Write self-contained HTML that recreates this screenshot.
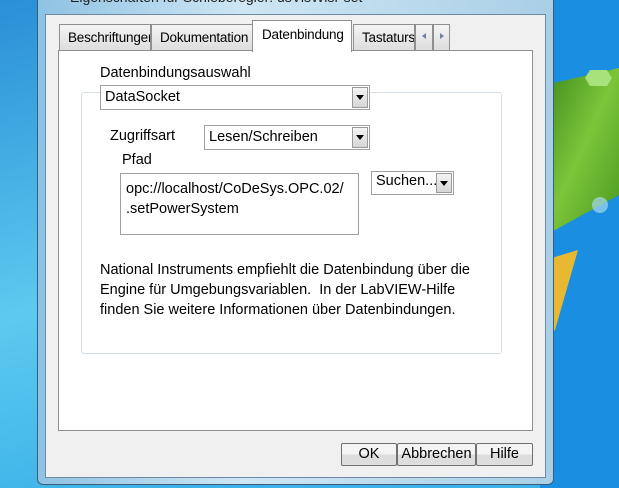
<!DOCTYPE html>
<html><head><meta charset="utf-8"><style>
body{margin:0;width:619px;height:488px;overflow:hidden;position:relative;font-family:"Liberation Sans","DejaVu Sans",sans-serif;font-size:14px;color:#000}
.a{position:absolute;box-sizing:border-box}
.tab{position:absolute;top:24px;height:27px;background:linear-gradient(#f4f4f4,#dcdcdc);border:1px solid #8e8f8f;border-bottom:none;font-size:13.5px;padding:5px 0 0 8px;box-sizing:border-box;white-space:nowrap;overflow:hidden;letter-spacing:-0.2px}
.combo{position:absolute;background:#fff;border:1px solid #a0a0a0;box-sizing:border-box;padding:3px 0 0 4px;font-size:14.5px}
.dd{position:absolute;right:1px;top:1px;bottom:1px;width:16px;background:linear-gradient(#f4f4f4,#d6d6d6);border:1px solid #9a9a9a;box-sizing:border-box}
.dd:after{content:"";position:absolute;left:3px;top:7px;border:4px solid transparent;border-top:5px solid #000}
.btn{position:absolute;top:443px;height:23px;background:linear-gradient(#f4f4f4 50%,#dddddd 50%);border:1px solid #707070;border-radius:2px;box-sizing:border-box;text-align:center;font-size:14.5px;padding-top:2px}
</style></head><body>
<svg class="a" style="left:0;top:0" width="619" height="488">
<defs><linearGradient id="bg" x1="0" y1="0" x2="0.3" y2="1"><stop offset="0" stop-color="#2a8fd6"/><stop offset="0.6" stop-color="#5ccaf0"/><stop offset="1" stop-color="#3cb2e8"/></linearGradient>
<linearGradient id="gr" x1="0" y1="0" x2="1" y2="1"><stop offset="0" stop-color="#3d8a1c"/><stop offset="0.5" stop-color="#7cc53a"/><stop offset="1" stop-color="#4a9a20"/></linearGradient></defs>
<rect width="619" height="488" fill="url(#bg)"/>
<rect x="540" width="79" height="488" fill="#1a8ee0"/>
<polygon points="545,85 619,68 619,195 555,230 545,230" fill="url(#gr)"/>
<polygon points="545,260 578,250 555,330 545,340" fill="#e8b830"/>
<polygon points="590,70 607,70 612,78 607,86 590,86 585,78" fill="#a7e27a"/>
<circle cx="600" cy="205" r="8" fill="#a7d7f0" opacity="0.7"/>
</svg>
<div class="a" style="left:37px;top:-10px;width:517px;height:495px;background:linear-gradient(90deg,#8fc2e3,#cfe6f3 40%,#a9cfe6);border:1px solid #3b5d7a;border-radius:6px"></div>
<div class="a" style="left:70px;top:-11px;font-size:14px;color:#222">Eigenschaften für Schieberegler: usVisWisPset</div>
<div class="a" style="left:45px;top:14px;width:501px;height:464px;background:#f0f0f0;border:1px solid #6a8aa5"></div>
<div class="tab" style="left:59px;width:92px">Beschriftungen</div>
<div class="tab" style="left:151px;width:102px">Dokumentation</div>
<div class="tab" style="left:353px;width:62px">Tastaturst</div>
<div class="tab" style="left:415px;width:18px;padding:0"></div>
<div class="tab" style="left:433px;width:17px;padding:0"></div>
<div class="a" style="left:422px;top:33px;border:3px solid transparent;border-right:4px solid #7080a0;border-left:none"></div>
<div class="a" style="left:440px;top:33px;border:3px solid transparent;border-left:4px solid #7080a0;border-right:none"></div>
<div class="a" style="left:58px;top:50px;width:475px;height:381px;background:#fff;border:1px solid #8e8f8f"></div>
<div class="a" style="left:252px;top:20px;width:100px;height:32px;background:#fff;border:1px solid #8e8f8f;border-bottom:none;font-size:13.5px;padding:6px 0 0 9px;letter-spacing:-0.2px;white-space:nowrap">Datenbindung</div>
<div class="a" style="left:81px;top:92px;width:421px;height:262px;border:1px solid #d5dfe5;border-radius:3px"></div>
<div class="a" style="left:100px;top:65px;font-size:14.5px">Datenbindungsauswahl</div>
<div class="combo" style="left:100px;top:85px;width:270px;height:25px">DataSocket<div class="dd"></div></div>
<div class="a" style="left:110px;top:128px;font-size:14.5px">Zugriffsart</div>
<div class="combo" style="left:204px;top:125px;width:166px;height:25px">Lesen/Schreiben<div class="dd"></div></div>
<div class="a" style="left:122px;top:152px;font-size:14.5px">Pfad</div>
<div class="a" style="left:120px;top:173px;width:239px;height:62px;border:1px solid #a0a0a0;background:#fff;padding:5px 0 0 5px;font-size:14.5px;line-height:20px">opc://localhost/CoDeSys.OPC.02/<br>.setPowerSystem</div>
<div class="combo" style="left:371px;top:171px;width:83px;height:24px;padding:1px 0 0 4px">Suchen...<div class="dd"></div></div>
<div class="a" style="left:100px;top:260px;font-size:14.5px;line-height:20px">National Instruments empfiehlt die Datenbindung über die<br>Engine für Umgebungsvariablen.&nbsp; In der LabVIEW-Hilfe<br>finden Sie weitere Informationen über Datenbindungen.</div>
<div class="btn" style="left:341px;width:56px">OK</div>
<div class="btn" style="left:397px;width:79px">Abbrechen</div>
<div class="btn" style="left:476px;width:57px">Hilfe</div>
</body></html>
